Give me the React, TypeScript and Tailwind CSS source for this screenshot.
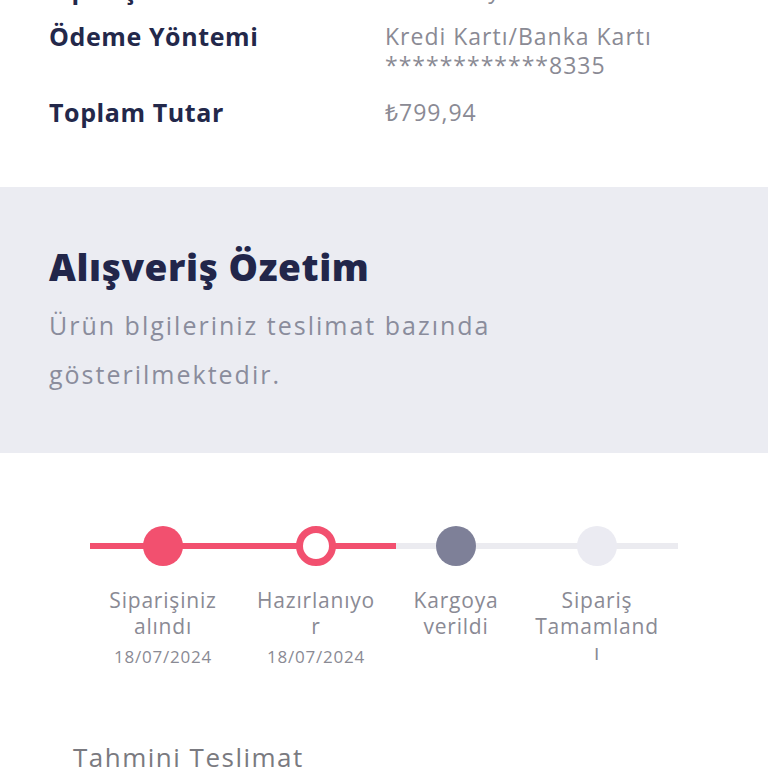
const steps = [
  { lines: ['Siparişiniz', 'alındı'], date: '18/07/2024', state: 'done' },
  { lines: ['Hazırlanıyo', 'r'], date: '18/07/2024', state: 'current' },
  { lines: ['Kargoya', 'verildi'], date: '', state: 'next' },
  { lines: ['Sipariş', 'Tamamland', 'ı'], date: '', state: 'idle' },
]

function Dot({ state }: { state: string }) {
  if (state === 'done') return <div className="h-10 w-10 rounded-full bg-[#f2506f]" />
  if (state === 'current') return <div className="h-10 w-10 rounded-full border-[7px] border-[#f2506f] bg-white" />
  if (state === 'next') return <div className="h-10 w-10 rounded-full bg-[#7e8098]" />
  return <div className="h-10 w-10 rounded-full bg-[#ebebf2]" />
}

function Stepper() {
  return (
    <div className="mx-[90px] pt-[73px]">
      <div className="relative grid grid-cols-[146px_160px_120px_162px]">
        <div className="absolute left-0 right-0 top-[17px] flex h-[6px]">
          <div className="w-[52%] bg-[#f2506f]" />
          <div className="flex-1 bg-[#ebebf0]" />
        </div>
        {steps.map(s => (
          <div key={s.lines.join('')} className="relative flex flex-col items-center">
            <Dot state={s.state} />
            <div className="mt-[21px] whitespace-nowrap text-center text-[21px] leading-[26px] tracking-[0.8px] text-[#8a8a94]">
              {s.lines.map(l => <div key={l}>{l}</div>)}
            </div>
            {s.date && <div className="mt-[7px] text-[17px] leading-[22px] tracking-[0.8px] text-[#8a8a94]">{s.date}</div>}
          </div>
        ))}
      </div>
    </div>
  )
}

export default function App() {
  return (
    <div className="h-[768px] w-[768px] overflow-hidden bg-white font-['Open_Sans',sans-serif]">
      <div className="-mt-[25px] px-[49px] pb-[60px]">
        <div className="grid grid-cols-[336px_1fr] gap-y-[18px]">
          <div className="text-[25px] font-bold leading-[29px] tracking-[0.6px] text-[#23284a]">Sipariş Durumu</div>
          <div className="text-[23px] leading-[29px] tracking-[1px] text-[#8a8a94]">Hazırlanıyor</div>
          <div className="text-[25px] font-bold leading-[29px] tracking-[0.6px] text-[#23284a]">Ödeme Yöntemi</div>
          <div className="text-[23px] leading-[29px] tracking-[1px] text-[#8a8a94]">
            <div>Kredi Kartı/Banka Kartı</div>
            <div>************8335</div>
          </div>
          <div className="text-[25px] font-bold leading-[29px] tracking-[0.6px] text-[#23284a]">Toplam Tutar</div>
          <div className="text-[23px] leading-[29px] tracking-[1px] text-[#8a8a94]">₺799,94</div>
        </div>
      </div>
      <div className="h-[266px] bg-[#ebecf2] px-[49px] pt-[57px]">
        <h2 className="text-[37px] font-extrabold leading-[46px] tracking-[0.6px] text-[#22264a]">Alışveriş Özetim</h2>
        <p className="mt-[11px] w-[480px] text-[25px] leading-[49px] tracking-[2px] text-[#8a8c9c]">
          Ürün blgileriniz teslimat bazında gösterilmektedir.
        </p>
      </div>
      <Stepper />
      <div className="mt-[70px] px-[73px] text-[26px] tracking-[1.5px] text-[#7a7a80]">Tahmini Teslimat</div>
    </div>
  )
}
